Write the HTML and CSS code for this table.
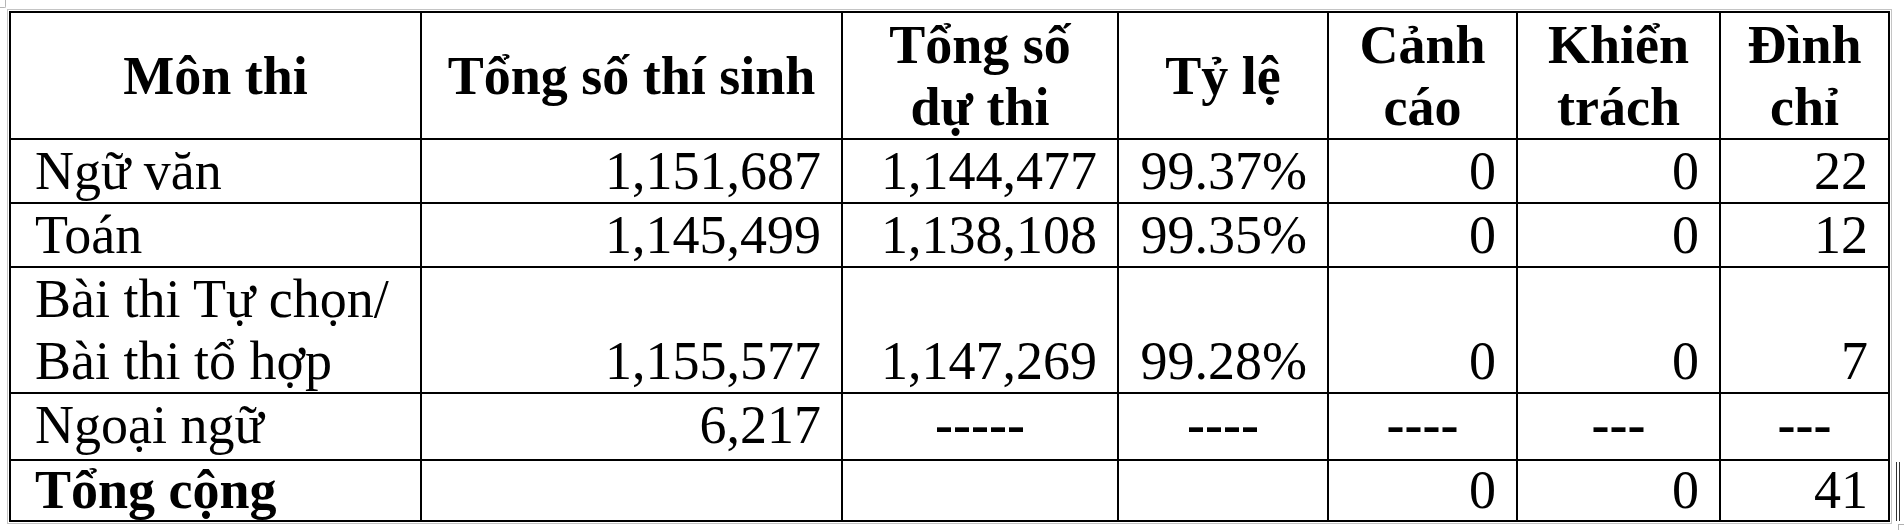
FILE: index.html
```html
<!DOCTYPE html>
<html lang="vi">
<head>
<meta charset="utf-8">
<title>Thống kê thí sinh</title>
<link rel="stylesheet" href="styles.css">
</head>
<body>
<div class="sheet">
  <span class="handle"></span>
  <table class="stats">
    <thead>
      <tr class="head">
        <th class="c1">Môn thi</th>
        <th class="c2">Tổng số thí sinh</th>
        <th class="c3">Tổng số<br>dự thi</th>
        <th class="c4">Tỷ lệ</th>
        <th class="c5">Cảnh<br>cáo</th>
        <th class="c6">Khiển<br>trách</th>
        <th class="c7">Đình<br>chỉ</th>
      </tr>
    </thead>
    <tbody>
      <tr class="row single">
        <td class="label">Ngữ văn</td>
        <td class="num">1,151,687</td>
        <td class="num">1,144,477</td>
        <td class="num">99.37%</td>
        <td class="num">0</td>
        <td class="num">0</td>
        <td class="num">22</td>
      </tr>
      <tr class="row single">
        <td class="label">Toán</td>
        <td class="num">1,145,499</td>
        <td class="num">1,138,108</td>
        <td class="num">99.35%</td>
        <td class="num">0</td>
        <td class="num">0</td>
        <td class="num">12</td>
      </tr>
      <tr class="row double">
        <td class="label">Bài thi Tự chọn/<br>Bài thi tổ hợp</td>
        <td class="num">1,155,577</td>
        <td class="num">1,147,269</td>
        <td class="num">99.28%</td>
        <td class="num">0</td>
        <td class="num">0</td>
        <td class="num">7</td>
      </tr>
      <tr class="row lang">
        <td class="label">Ngoại ngữ</td>
        <td class="num">6,217</td>
        <td class="dash">-----</td>
        <td class="dash">----</td>
        <td class="dash">----</td>
        <td class="dash">---</td>
        <td class="dash">---</td>
      </tr>
      <tr class="row total">
        <td class="label strong">Tổng cộng</td>
        <td class="num"></td>
        <td class="num"></td>
        <td class="num"></td>
        <td class="num">0</td>
        <td class="num">0</td>
        <td class="num">41</td>
      </tr>
    </tbody>
  </table>
  <span class="caret"></span>
  <span class="corner"></span>
</div>
</body>
</html>
```

FILE: styles.css
```css
html, body {
  margin: 0;
  padding: 0;
  background: #ffffff;
}

.sheet {
  position: relative;
  width: 1904px;
  height: 530px;
  padding: 11px 0 0 9px;
  box-sizing: border-box;
  overflow: hidden;
}

.stats {
  border-collapse: separate;
  border-spacing: 0;
  border-top: 2px solid #000;
  border-left: 2px solid #000;
  outline: 1px solid #c4c4c4;
  outline-offset: 1px;
  font-family: "Liberation Serif", "Times New Roman", serif;
  font-size: 54px;
  color: #000;
}

.stats th,
.stats td {
  border-right: 2px solid #000;
  border-bottom: 2px solid #000;
  padding: 0 20px;
  line-height: 62px;
  white-space: nowrap;
  overflow: hidden;
}

.stats th {
  font-weight: bold;
  text-align: center;
  vertical-align: middle;
  height: 125px;
}

.c1 { width: 369px; }
.c2 { width: 379px; }
.c3 { width: 234px; }
.c4 { width: 168px; }
.c5 { width: 147px; }
.c6 { width: 161px; }
.c7 { width: 127px; }

.stats .label {
  padding-left: 24px;
  text-align: left;
}

.stats .num {
  text-align: right;
}

.stats .dash {
  text-align: center;
  font-weight: bold;
}

.strong {
  font-weight: bold;
}

.row td {
  vertical-align: bottom;
}

.single td {
  height: 62px;
}

.double td {
  height: 124px;
}

.lang td {
  height: 65px;
  vertical-align: top;
}

.total td {
  height: 59px;
  line-height: 59px;
  vertical-align: top;
}

.handle {
  position: absolute;
  left: 0;
  top: 0;
  width: 5px;
  height: 7px;
  border-right: 1px solid #b5b5b5;
  border-bottom: 1px solid #b5b5b5;
  border-bottom-right-radius: 2px;
}

.caret {
  position: absolute;
  left: 1896px;
  top: 462px;
  width: 2px;
  height: 59px;
  border-left: 1px solid #333;
  border-right: 1px solid #333;
}

.corner {
  position: absolute;
  left: 1898px;
  top: 524px;
  width: 6px;
  height: 6px;
  border-top: 1px solid #b0b0b0;
  border-left: 1px solid #b0b0b0;
}
```
